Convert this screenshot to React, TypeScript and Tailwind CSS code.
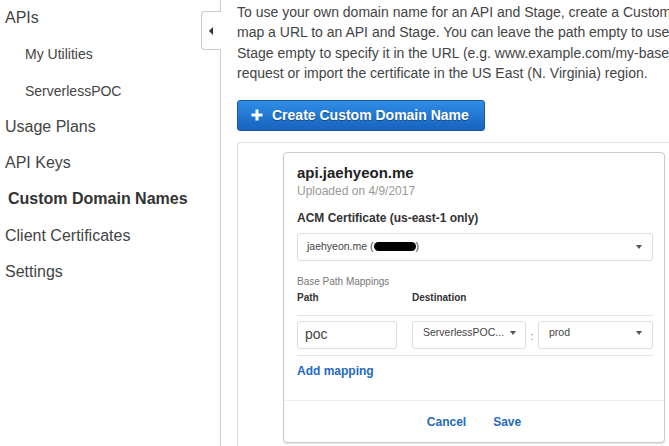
import React from "react";

function Caret() {
  return (
    <span className="w-0 h-0 border-x-[3px] border-x-transparent border-t-[4px] border-t-[#555]" />
  );
}

export default function App() {
  const side = [
    { t: "APIs", cls: "pl-[5px] text-[16px]" },
    { t: "My Utilities", cls: "pl-[25px] text-[14px]" },
    { t: "ServerlessPOC", cls: "pl-[25px] text-[14px]" },
    { t: "Usage Plans", cls: "pl-[5px] text-[16px]" },
    { t: "API Keys", cls: "pl-[5px] text-[16px]" },
    { t: "Custom Domain Names", cls: "pl-[8px] text-[16px] font-bold text-[#333]" },
    { t: "Client Certificates", cls: "pl-[5px] text-[16px]" },
    { t: "Settings", cls: "pl-[5px] text-[16px]" },
  ];
  return (
    <div className="w-[669px] h-[446px] overflow-hidden flex bg-white font-['Liberation_Sans',Arial,sans-serif] text-[#444]">
      <div className="relative w-[221px] shrink-0 border-r border-[#ccc]">
        {side.map((s) => (
          <div key={s.t} className={"h-[36.3px] leading-[36px] whitespace-nowrap " + s.cls}>
            {s.t}
          </div>
        ))}
        <div className="absolute left-[201px] top-[11px] w-[20px] h-[39px] bg-white border border-r-0 border-[#ccc] rounded-l-[4px] flex items-center pl-[7px]">
          <span className="w-0 h-0 border-y-[4px] border-y-transparent border-r-[4px] border-r-[#333]" />
        </div>
      </div>
      <div className="flex-1 min-w-0 overflow-hidden pl-[16px] pt-[2px]">
        <div className="text-[14px] leading-[20.4px] whitespace-nowrap text-[#444]">
          <div>To use your own domain name for an API and Stage, create a Custom Domain Name and base path mapping to</div>
          <div>map a URL to an API and Stage. You can leave the path empty to use the root of the domain, and leave the</div>
          <div>Stage empty to specify it in the URL (e.g. www.example.com/my-base-path/stage). You must first</div>
          <div>request or import the certificate in the US East (N. Virginia) region.</div>
        </div>
        <button className="mt-[16px] h-[31px] w-[248px] flex items-center pl-[13px] rounded-[3px] border border-[#1a58a6] bg-gradient-to-b from-[#2f8de6] to-[#1763be] text-white text-[14px] font-bold [text-shadow:0_1px_1px_rgba(0,0,0,0.35)]">
          <svg width="12" height="12" viewBox="0 0 12 12" className="mr-[9px]">
            <path d="M6 0.5v11M0.5 6h11" stroke="white" strokeWidth="3" />
          </svg>
          <span className="whitespace-nowrap">Create Custom Domain Name</span>
        </button>
        <div className="mt-[11px] w-[470px] h-[400px] border-l border-t border-[#ddd] rounded-tl-[4px] pl-[45px] pt-[9px]">
          <div className="w-[382px] border border-[#ccc] rounded-[4px] shadow-[0_1px_1px_rgba(0,0,0,0.12)] bg-white">
            <div className="pl-[13px] pr-[11px] pt-[10px]">
              <div className="text-[15px] leading-[20px] font-bold text-[#222]">api.jaehyeon.me</div>
              <div className="text-[12px] leading-[16px] text-[#999]">Uploaded on 4/9/2017</div>
              <div className="mt-[11px] text-[12px] leading-[16px] font-bold text-[#333]">ACM Certificate (us-east-1 only)</div>
              <div className="mt-[7px] h-[28px] border border-[#ddd] rounded-[3px] flex items-center pl-[9px] pr-[10px] text-[10.5px] text-[#444]">
                <span className="flex items-center whitespace-nowrap">
                  jaehyeon.me (<span className="inline-block w-[42px] h-[9px] rounded-full bg-black" />)
                </span>
                <span className="ml-auto flex">
                  <Caret />
                </span>
              </div>
              <div className="mt-[14px] text-[10px] leading-[14px] text-[#777]">Base Path Mappings</div>
              <div className="mt-[2px] flex text-[10px] leading-[14px] font-bold text-[#333]">
                <div className="w-[115px]">Path</div>
                <div>Destination</div>
              </div>
              <div className="mt-[10px] border-t border-[#e5e5e5]" />
              <div className="mt-[5px] flex items-center h-[28px]">
                <div className="w-[100px] h-[28px] border border-[#ddd] rounded-[3px] flex items-center pl-[7px] text-[14px] text-[#444]">
                  poc
                </div>
                <div className="ml-[15px] w-[114px] h-[28px] border border-[#ddd] rounded-[3px] flex items-center pl-[10px] pr-[9px] pb-[3px] text-[10.5px] text-[#444]">
                  <span className="whitespace-nowrap">ServerlessPOC...</span>
                  <span className="ml-auto flex">
                    <Caret />
                  </span>
                </div>
                <div className="w-[12px] text-center text-[10px] text-[#666] pt-[4px]">:</div>
                <div className="flex-1 h-[28px] border border-[#ddd] rounded-[3px] flex items-center pl-[10px] pr-[10px] pb-[3px] text-[10.5px] text-[#444]">
                  <span>prod</span>
                  <span className="ml-auto flex">
                    <Caret />
                  </span>
                </div>
              </div>
              <div className="mt-[6px] border-t border-[#e5e5e5]" />
              <div className="mt-[7px] text-[12px] leading-[16px] font-bold text-[#236bc2]">Add mapping</div>
              <div className="h-[21px]" />
            </div>
            <div className="border-t border-[#eee] pt-[13px] pb-[12px] flex justify-center gap-[27px] text-[12px] leading-[16px] font-bold text-[#236bc2]">
              <span>Cancel</span>
              <span>Save</span>
            </div>
          </div>
        </div>
      </div>
    </div>
  );
}
